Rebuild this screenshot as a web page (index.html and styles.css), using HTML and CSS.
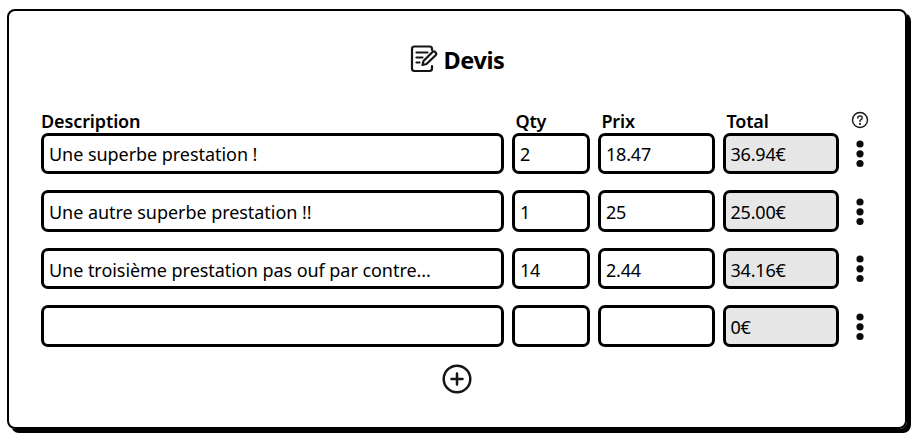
FILE: index.html
```html
<!DOCTYPE html>
<html lang="fr">
<head>
<meta charset="utf-8">
<title>Devis</title>
<link rel="stylesheet" href="styles.css">
</head>
<body>
<main class="card">
  <h1 class="title">
    <svg class="title-icon" viewBox="0 0 28 28" fill="none" stroke="#151515" stroke-width="2.200" stroke-linecap="round" stroke-linejoin="round">
      <path d="M22 5V4Q22 1.500 19.500 1.500H4.500Q2 1.500 2 4V23.500Q2 26 4.500 26H19.500Q22 26 22 23.500V21"/>
      <path d="M6.500 7.500H17.500M6.500 12.500H12.500M6.500 17.500H9.500"/>
      <path d="M12.500 20L13.500 16L22.500 7Q24 5.800 25.500 7.200Q27 8.700 25.600 10.200L16.500 19Z"/>
    </svg>
    <span class="title-text">Devis</span>
  </h1>
  <div class="grid head">
    <span class="h-desc">Description</span>
    <span class="h-col">Qty</span>
    <span class="h-col">Prix</span>
    <span class="h-col">Total</span>
    <svg class="help" viewBox="0 0 18 18" fill="none" stroke="#151515" stroke-width="1.400" stroke-linecap="round">
      <circle cx="9" cy="9" r="7.500"/>
      <path d="M6.800 7Q6.900 4.900 9 4.900Q11.200 5 11.200 6.900Q11.200 8 10 8.700Q9 9.300 9 10.300"/>
      <circle cx="9" cy="12.900" r=".4"/>
    </svg>
  </div>
  <div class="rows">
    <div class="grid row">
      <div class="field desc">Une superbe prestation !</div>
      <div class="field">2</div><div class="field">18.47</div><div class="field total">36.94€</div>
      <svg class="dots" viewBox="0 0 8 28"><circle cx="4" cy="4" r="3.600"/><circle cx="4" cy="13.800" r="3.600"/><circle cx="4" cy="23.500" r="3.600"/></svg>
    </div>
    <div class="grid row">
      <div class="field desc">Une autre superbe prestation !!</div>
      <div class="field">1</div><div class="field">25</div><div class="field total">25.00€</div>
      <svg class="dots" viewBox="0 0 8 28"><circle cx="4" cy="4" r="3.600"/><circle cx="4" cy="13.800" r="3.600"/><circle cx="4" cy="23.500" r="3.600"/></svg>
    </div>
    <div class="grid row">
      <div class="field desc">Une troisième prestation pas ouf par contre...</div>
      <div class="field">14</div><div class="field">2.44</div><div class="field total">34.16€</div>
      <svg class="dots" viewBox="0 0 8 28"><circle cx="4" cy="4" r="3.600"/><circle cx="4" cy="13.800" r="3.600"/><circle cx="4" cy="23.500" r="3.600"/></svg>
    </div>
    <div class="grid row">
      <div class="field desc"></div>
      <div class="field"></div><div class="field"></div><div class="field total">0€</div>
      <svg class="dots" viewBox="0 0 8 28"><circle cx="4" cy="4" r="3.600"/><circle cx="4" cy="13.800" r="3.600"/><circle cx="4" cy="23.500" r="3.600"/></svg>
    </div>
  </div>
  <svg class="add" viewBox="0 0 30 30" fill="none" stroke="#151515" stroke-width="2.500" stroke-linecap="round">
    <circle cx="15" cy="15" r="13.300"/>
    <path d="M15 9.500V20.500M9.500 15H20.500"/>
  </svg>
</main>
</body>
</html>
```
FILE: styles.css
```css
* { box-sizing: border-box; }
body {
  min-height: 442px;
  margin: 0;
  padding: 9px 0 0 7px;
  background: #fff;
  color: #000;
  font-family: "Segoe UI", "Noto Sans", "Open Sans", sans-serif;
}
.card {
  width: 900px;
  height: 420px;
  padding: 32px;
  border: 2px solid #000;
  border-radius: 8px;
  box-shadow: 4px 4px 0 #000;
}
.title {
  display: flex;
  height: 34px;
  margin: 0 0 0 369px;
  gap: 5.5px;
  align-items: flex-start;
  font-size: 23.5px;
  font-weight: 700;
  line-height: 34px;
  letter-spacing: -0.4px;
}
.title-icon { width: 28px; height: 28px; margin-top: 2px; }
.grid {
  display: grid;
  grid-template-columns: 463px 78px 117px 116px 24px;
  column-gap: 8px;
}
.head {
  height: 24px;
  margin-top: 32px;
  font-size: 18px;
  font-weight: 600;
  line-height: 24px;
  white-space: nowrap;
}
.h-desc { letter-spacing: -0.12px; }
.h-col { padding-left: 3.5px; letter-spacing: -0.2px; }
.help { width: 18px; height: 18px; margin: 2px 0 0 4px; }
.rows { display: grid; row-gap: 16px; }
.row { height: 41px; }
.row:nth-child(even) { height: 42px; }
.field {
  padding: 2px 0 0 5px;
  border: 3px solid #000;
  border-radius: 7px;
  font-size: 18px;
  line-height: 32px;
  letter-spacing: -0.2px;
  white-space: nowrap;
}
.row + .row .field { padding-top: 3px; }
.total { padding-left: 4.5px; background: #e7e7e7; }
.desc { letter-spacing: -0.05px; }
.dots { width: 8px; height: 28px; margin: 7px 0 0 8.5px; fill: #0c0c0c; }
.row:nth-child(even) .dots { margin-top: 8px; }
.add { display: block; width: 30px; height: 30px; margin: 17px 0 0 401px; }
```
